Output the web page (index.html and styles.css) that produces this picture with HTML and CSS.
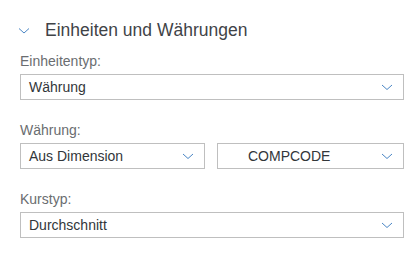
FILE: index.html
```html
<html lang="de">
<head>
    <meta charset="UTF-8">
    <title>Einheiten und Währungen</title>
    <link rel="stylesheet" href="styles.css">
</head>
<body>
    <!-- Panel -->
    <div class="panel">
        <div class="panel-header">
            <svg class="toggle" width="12" height="8" viewBox="0 0 12 8">
                <path d="M1 1.5 L6 6 L11 1.5" fill="none" stroke="#4a86c5" stroke-width="1"/>
            </svg>
            <span>Einheiten und Währungen</span>
        </div>

        <div class="field">
            <label>Einheitentyp:</label>
            <div class="select">
                <span>Währung</span>
                <svg class="arrow" width="12" height="7" viewBox="0 0 12 7">
                    <path d="M1 1 L6 5.5 L11 1" fill="none" stroke="#4a86c5" stroke-width="1"/>
                </svg>
            </div>
        </div>

        <div class="field">
            <label>Währung:</label>
            <div class="row">
                <div class="select source">
                    <span>Aus Dimension</span>
                    <svg class="arrow" width="12" height="7" viewBox="0 0 12 7">
                        <path d="M1 1 L6 5.5 L11 1" fill="none" stroke="#4a86c5" stroke-width="1"/>
                    </svg>
                </div>
                <div class="select dimension">
                    <span>COMPCODE</span>
                    <svg class="arrow" width="12" height="7" viewBox="0 0 12 7">
                        <path d="M1 1 L6 5.5 L11 1" fill="none" stroke="#4a86c5" stroke-width="1"/>
                    </svg>
                </div>
            </div>
        </div>

        <div class="field">
            <label>Kurstyp:</label>
            <div class="select">
                <span>Durchschnitt</span>
                <svg class="arrow" width="12" height="7" viewBox="0 0 12 7">
                    <path d="M1 1 L6 5.5 L11 1" fill="none" stroke="#4a86c5" stroke-width="1"/>
                </svg>
            </div>
        </div>
    </div>
</body>
</html>
```

FILE: styles.css
```css
body {
    font-family: 'Liberation Sans', Arial, sans-serif;
    margin: 0;
    padding: 0;
    background-color: #ffffff;
    color: #32363a;
}

/* Panel */
.panel {
    padding: 18px 14px 0 20px;
}

.panel-header {
    display: flex;
    align-items: center;
    height: 24px;
    margin-bottom: 10px;
    font-size: 17.5px;
    color: #3f4347;
}

.panel-header .toggle {
    margin: 1px 15px 0 -2px;
}

/* Fields */
.field {
    margin-bottom: 21px;
}

.field label {
    display: block;
    font-size: 14px;
    line-height: 18px;
    color: #6a6d70;
    margin-bottom: 4px;
}

.row {
    display: flex;
    gap: 12px;
}

.select {
    box-sizing: border-box;
    height: 26px;
    border: 1px solid #bfbfbf;
    display: flex;
    align-items: center;
    justify-content: space-between;
    padding: 0 10px 0 8px;
    font-size: 14px;
    color: #32363a;
}

.select.source {
    width: 185px;
}

.select.dimension {
    flex: 1;
    padding-left: 30px;
}

.select .arrow {
    margin-top: 1px;
}
```
